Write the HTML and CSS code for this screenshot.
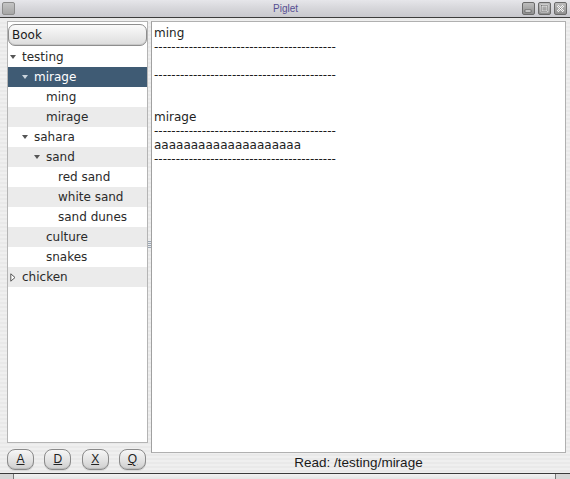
FILE: index.html
```html
<!DOCTYPE html>
<html>
<head>
<meta charset="utf-8">
<link rel="stylesheet" href="styles.css">
</head>
<body>
<div class="window">
  <div class="titlebar">
    <div class="tb-icon"></div>
    <div class="tb-title">Piglet</div>
    <div class="tb-buttons">
      <div class="tb-btn"><svg width="9" height="9" viewBox="0 0 9 9"><rect x="1" y="6" width="6" height="2" fill="#fff" stroke="#444" stroke-width="0.6"/></svg></div>
      <div class="tb-btn"><svg width="9" height="9" viewBox="0 0 9 9"><rect x="1.5" y="1.5" width="6" height="6" fill="none" stroke="#fff" stroke-width="1.6"/><rect x="1.5" y="1.5" width="6" height="6" fill="none" stroke="#444" stroke-width="0.5"/></svg></div>
      <div class="tb-btn"><svg width="9" height="9" viewBox="0 0 9 9"><path d="M1.5 1.5 L7.5 7.5 M7.5 1.5 L1.5 7.5" stroke="#fff" stroke-width="1.8"/><path d="M1.5 1.5 L7.5 7.5 M7.5 1.5 L1.5 7.5" stroke="#555" stroke-width="0.5"/></svg></div>
    </div>
  </div>
  <div class="main">
    <div class="left">
      <div class="tree">
        <div class="book">Book</div>
        <div class="row l0"><span class="arrow down"></span>testing</div>
        <div class="row l1 sel"><span class="arrow down light"></span>mirage</div>
        <div class="row l2">ming</div>
        <div class="row l2 alt">mirage</div>
        <div class="row l1"><span class="arrow down"></span>sahara</div>
        <div class="row l2 alt"><span class="arrow down"></span>sand</div>
        <div class="row l3">red sand</div>
        <div class="row l3 alt">white sand</div>
        <div class="row l3">sand dunes</div>
        <div class="row l2 alt">culture</div>
        <div class="row l2">snakes</div>
        <div class="row l0 alt"><svg class="arrow-right" width="6" height="9" viewBox="0 0 6 9"><path d="M0.8 0.8 L5 4.5 L0.8 8.2 Z" fill="#fff" stroke="#555" stroke-width="1"/></svg>chicken</div>
      </div>
      <div class="buttons">
        <div class="pill"><u>A</u></div>
        <div class="pill"><u>D</u></div>
        <div class="pill"><u>X</u></div>
        <div class="pill"><u>Q</u></div>
      </div>
    </div>
    <div class="splitter"><div class="grip"></div></div>
    <div class="right">
      <div class="text">
        <div class="line">ming</div>
        <div class="line">------------------------------------------</div>
        <div class="line"></div>
        <div class="line">------------------------------------------</div>
        <div class="line"></div>
        <div class="line"></div>
        <div class="line">mirage</div>
        <div class="line">------------------------------------------</div>
        <div class="line">aaaaaaaaaaaaaaaaaaaa</div>
        <div class="line">------------------------------------------</div>
      </div>
      <div class="status">Read: /testing/mirage</div>
    </div>
  </div>
  <div class="bottom">
    <div class="b-left"></div>
    <div class="b-mid"></div>
    <div class="b-right"></div>
  </div>
</div>
</body>
</html>
```

FILE: styles.css
```css
* { box-sizing: border-box; }
html, body { margin: 0; padding: 0; }
body {
  width: 570px;
  height: 479px;
  overflow: hidden;
  background: #ececec;
  font-family: "DejaVu Sans", sans-serif;
}
.window {
  width: 570px;
  height: 479px;
  display: flex;
  flex-direction: column;
  background: repeating-linear-gradient(to bottom, #efefef 0, #efefef 2px, #e9e9e9 2px, #e9e9e9 4px);
}
.titlebar {
  height: 18px;
  flex: none;
  display: flex;
  align-items: center;
  padding: 0 3px 0 2px;
  background: linear-gradient(to bottom, #e6e6ea 0%, #d6d6da 50%, #c9c9ce 100%);
  border-bottom: 1px solid #3c3c3c;
}
.tb-icon {
  width: 13px;
  height: 13px;
  border: 1px solid #8c8c8c;
  border-radius: 2px;
  background: linear-gradient(to bottom, #c4c4c4, #a6a6a6);
}
.tb-title {
  flex: 1;
  text-align: center;
  font-family: "Liberation Sans", sans-serif;
  font-size: 10px;
  color: #574f92;
  padding-left: 34px;
}
.tb-buttons { display: flex; gap: 3px; }
.tb-btn {
  width: 13px;
  height: 13px;
  border: 1px solid #6a6a6a;
  border-radius: 2px;
  background: linear-gradient(to bottom, #bdbdbd, #8f8f8f);
  display: flex;
  align-items: center;
  justify-content: center;
}
.main {
  flex: 1;
  display: flex;
  padding: 3px 4px 0 7px;
}
.left {
  width: 141px;
  display: flex;
  flex-direction: column;
}
.tree {
  height: 422px;
  background: #fff;
  border: 1px solid #b4b4b4;
  padding: 2px 0 0 0;
}
.book {
  height: 22px;
  margin: 0 0 1px 0;
  border: 1px solid #8e8e8e;
  border-radius: 7px;
  background: linear-gradient(to bottom, #fbfbfb 0%, #ececec 50%, #dcdcdc 100%);
  box-shadow: inset 0 -1px 0 #c8c8c8;
  font-size: 12px;
  line-height: 21px;
  padding-left: 3px;
  color: #1a1a1a;
}
.row {
  height: 20px;
  font-size: 12px;
  line-height: 20px;
  color: #2a2a2a;
  position: relative;
  white-space: nowrap;
}
.row.alt { background: #ebebeb; }
.row.sel { background: #3f5b74; color: #fff; }
.l0 { padding-left: 14px; }
.l1 { padding-left: 26px; }
.l2 { padding-left: 38px; }
.l3 { padding-left: 50px; }
.arrow {
  position: absolute;
  top: 8px;
  width: 0;
  height: 0;
}
.l0 .arrow { left: 2px; }
.l1 .arrow { left: 14px; }
.l2 .arrow { left: 26px; }
.arrow.down {
  border-left: 3px solid transparent;
  border-right: 3px solid transparent;
  border-top: 4px solid #555;
}
.arrow.down.light { border-top-color: #c9d3dc; }
.arrow-right {
  position: absolute;
  left: 2px;
  top: 6px;
}
.buttons {
  margin-top: 6px;
  height: 22px;
  display: flex;
  justify-content: space-between;
  padding-right: 2px;
}
.pill {
  width: 27px;
  height: 21px;
  border: 1px solid #8a8a8a;
  border-radius: 8px;
  background: linear-gradient(to bottom, #f6f6f6 0%, #e2e2e2 55%, #cfcfcf 100%);
  box-shadow: inset 0 -1px 0 #bdbdbd, 0 1px 0 #d8d8d8;
  font-family: "Liberation Sans", sans-serif;
  font-size: 12px;
  line-height: 19px;
  text-align: center;
  color: #222;
}
.splitter {
  width: 3px;
  position: relative;
}
.grip {
  position: absolute;
  left: 0;
  top: 220px;
  width: 3px;
  height: 8px;
  background: repeating-linear-gradient(to bottom, #9aa6b4 0, #9aa6b4 1px, transparent 1px, transparent 2px);
}
.right {
  flex: 1;
  display: flex;
  flex-direction: column;
}
.text {
  height: 432px;
  background: #fff;
  border: 1px solid #b0b0b0;
  border-left-color: #a0a0a0;
  padding: 4px 0 0 2px;
  font-size: 12px;
  color: #1e1e1e;
}
.line {
  height: 14px;
  line-height: 14px;
  white-space: nowrap;
}
.status {
  flex: 1;
  text-align: center;
  font-family: "Liberation Sans", sans-serif;
  font-size: 13.5px;
  line-height: 20px;
  color: #1a1a1a;
}
.bottom {
  height: 7px;
  flex: none;
  display: flex;
  border-top: 1px solid #3a3a3a;
  background: #e4e4e4;
}
.b-left { width: 14px; background: #d6d6d6; border-right: 1px solid #777; }
.b-mid { flex: 1; background: linear-gradient(to bottom, #f2f2f2, #e2e2e2); }
.b-right { width: 15px; background: #d6d6d6; border-left: 1px solid #777; }
```
